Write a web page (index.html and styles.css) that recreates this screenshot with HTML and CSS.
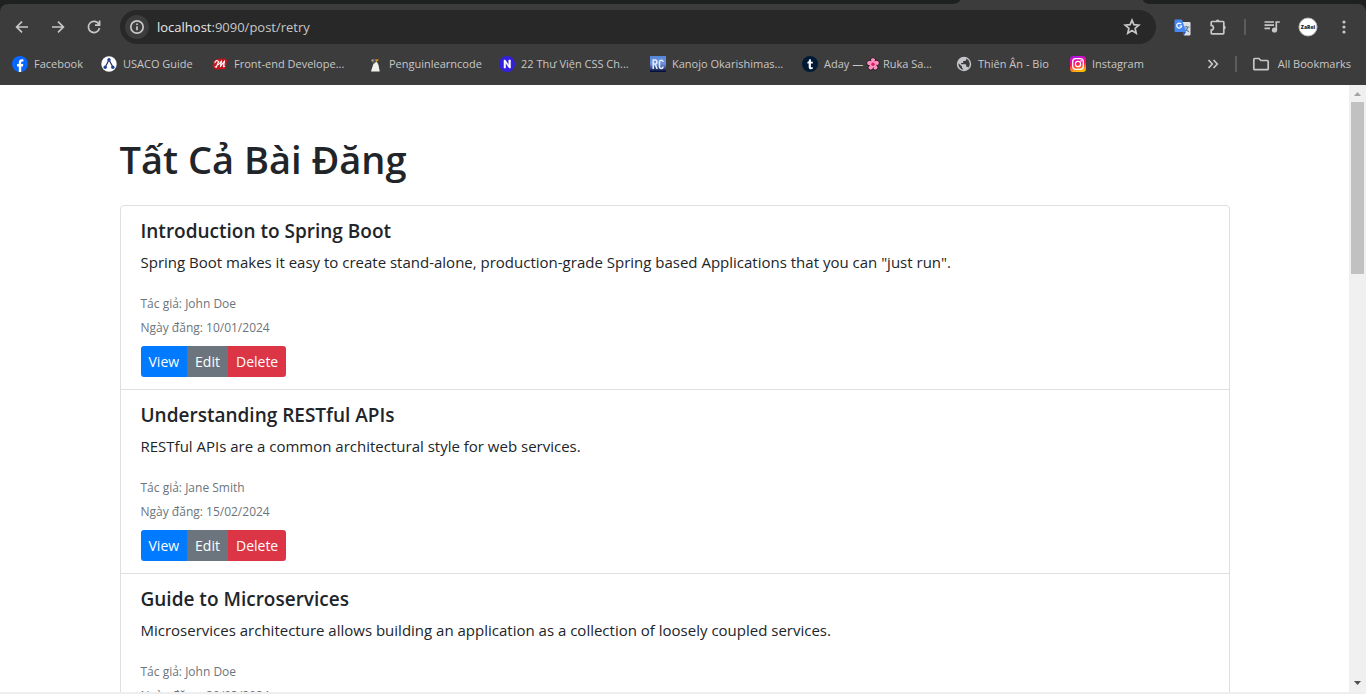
FILE: index.html
```html
<!DOCTYPE html>
<html lang="vi">
<head>
<meta charset="utf-8">
<title>Tất Cả Bài Đăng</title>
<link rel="stylesheet" href="styles.css">
</head>
<body>
<div class="browser">
  <header class="chrome">
    <div class="tabstrip"><span class="strip-left"></span><span class="strip-tab"></span><span class="strip-right"></span></div>
    <div class="frame">
    <div class="toolbar">
      <button class="tool" aria-label="Back"><svg width="16" height="16" viewBox="0 0 16 16" class="stroke"><path d="M14 8H3M8 2.6L2.6 8L8 13.4"/></svg></button>
      <button class="tool" aria-label="Forward"><svg width="16" height="16" viewBox="0 0 16 16" class="stroke"><path d="M2 8h11M8 2.6L13.4 8L8 13.4"/></svg></button>
      <button class="tool" aria-label="Reload"><svg width="16" height="16" viewBox="0 0 16 16" class="stroke"><path d="M12.9 5.2A5.6 5.6 0 1 0 13.5 9M13.6 1.6V6.2H9"/></svg></button>
      <div class="omnibox">
        <button class="site-info" aria-label="Site information"><svg width="16" height="16" viewBox="0 0 16 16" class="stroke"><circle cx="8" cy="8" r="6.2"/><path d="M8 7.2v4M8 4.4v1.5"/></svg></button>
        <div class="url"><span class="host">localhost</span>:9090/post/retry</div>
        <button class="tool" aria-label="Bookmark this page"><svg width="18" height="18" viewBox="0 0 18 18" class="stroke"><path d="M9 2.2l1.9 4.5 4.9.4-3.7 3.2 1.1 4.8L9 12.500l-4.200 2.600 1.100-4.800-3.700-3.200 4.900-.4z"/></svg></button>
      </div>
      <button class="tool" aria-label="Google Translate"><svg width="17" height="17" viewBox="0 0 17 17"><path d="M6 3h9.500a1 1 0 0 1 1 1v11.500a1 1 0 0 1-1 1H10z" fill="#dfe1e5"/><path d="M9.500 8h6M12.500 6.800V8M14 8c-.6 2.500-2 4-4 5M11.500 9.500c.8 1.500 2 2.600 3.500 3.300" stroke="#607d9b" stroke-width="1.100" fill="none"/><path d="M1.500.5H8l4 12.500H1.500a1 1 0 0 1-1-1V1.500a1 1 0 0 1 1-1z" fill="#4688f1"/><path d="M8.500 13H12l-2.200 3.400z" fill="#2757c4"/><path d="M7.300 5.200A2.500 2.500 0 1 0 7.700 7H5.400" stroke="#fff" stroke-width="1.200" fill="none"/></svg></button>
      <button class="tool" aria-label="Extensions"><svg width="18" height="18" viewBox="0 0 18 18" class="stroke"><path d="M3 3.500H14a.8.8 0 0 1 .8.8V15a.8.8 0 0 1-.8.8H3a.8.8 0 0 1-.8-.8V12.200C5.200 12 5.200 7.600 2.200 7.400V4.300A.8.8 0 0 1 3 3.500Z"/><path d="M6.800 3.500a1.900 1.900 0 0 1 3.800 0zM14.800 7.600a1.900 1.900 0 0 1 0 3.800z" fill="#c7c7c7" stroke="none"/></svg></button>
      <span class="divider"></span>
      <button class="tool" aria-label="Media controls"><svg width="18" height="16" viewBox="0 0 18 16"><path d="M1.500 3h9.500M1.500 6.200h9.500M1.500 9.400h5.500M13.300 11V3h3.500" class="stroke"/><circle cx="11.500" cy="11" r="2.600" fill="#c7c7c7"/></svg></button>
      <button class="tool" aria-label="Profile"><svg width="20" height="20" viewBox="0 0 20 20"><circle cx="10" cy="10" r="9" fill="#fff" stroke="#bcbcbc"/><text x="10" y="12" text-anchor="middle" class="avatar-text">ZaRei</text></svg></button>
      <button class="tool" aria-label="Menu"><svg width="6" height="16" viewBox="0 0 6 16" fill="#c7c7c7"><circle cx="3" cy="3" r="1.600"/><circle cx="3" cy="8" r="1.600"/><circle cx="3" cy="13" r="1.600"/></svg></button>
    </div>
    <nav class="bookmarks" aria-label="Bookmarks">
      <div class="marks">
      <a href="#"><svg width="16" height="16" viewBox="0 0 16 16"><circle cx="8" cy="8" r="8" fill="#0866ff"/><path d="M6.800 16V10.400H5V8h1.800V6.700C6.800 4.400 8 3.300 10 3.300c.6 0 1.100.1 1.400.2v2.100h-1c-1 0-1.200.5-1.200 1.300V8h2.100l-.4 2.400H9.200V16z" fill="#fff"/></svg>Facebook</a>
      <a href="#"><svg width="16" height="16" viewBox="0 0 16 16"><circle cx="8" cy="8" r="7.700" fill="#fff"/><path d="M8 3.800L4.200 11.300M8 3.800L12 11.300" stroke="#222c55" stroke-width="1.200"/><circle cx="8" cy="3.800" r="1.700" fill="#1c3f9b"/><circle cx="4.200" cy="11.300" r="1.700" fill="#1c3f9b"/><circle cx="11.800" cy="11.300" r="1.700" fill="#1c3f9b"/></svg>USACO Guide</a>
      <a href="#"><svg width="16" height="16" viewBox="0 0 16 16"><path d="M1.500 5L5 3l9-.5L15 5l-1.500 8-10.500.5-2.500-3z" fill="#c4161c"/><path d="M6 5C4 4 2.300 6.300 3.300 7M6.800 5L4.300 11.200 2.800 10.500M6.300 9L9.500 5 8.500 10.500 12.500 5 11.500 10.700 13 10" fill="none" stroke="#fff" stroke-width="1.200" stroke-linejoin="round"/></svg>Front-end Develope...</a>
      <a href="#"><svg width="16" height="16" viewBox="0 0 16 16"><path d="M7 6.500L10 6l1.500 3 1.200 6.500H4L6 9z" fill="#f1f1ec"/><path d="M4 3.500L7 2.500l2 1.500-.5 2L7 8 5 6.500z" fill="#55595b"/><path d="M8 3.500h4L9.500 6z" fill="#f4a21c"/><circle cx="5.500" cy="4.500" r="1" fill="#a9b0b3"/></svg>Penguinlearncode</a>
      <a href="#"><svg width="16" height="16" viewBox="0 0 16 16"><circle cx="8" cy="8" r="8" fill="#3420dc"/><path d="M5 12V4h1.200L9.800 9.200V4H11.500V12H10.200L6.600 6.800V12z" fill="#fff" stroke="#fff" stroke-width=".5"/></svg>22 Thư Viện CSS Ch...</a>
      <a href="#"><svg width="16" height="16" viewBox="0 0 16 16"><defs><linearGradient id="rc" x2="0" y2="1"><stop stop-color="#5686d8"/><stop offset=".5" stop-color="#6d93dc"/><stop offset="1" stop-color="#00072f"/></linearGradient></defs><rect width="16" height="16" fill="url(#rc)"/><path d="M3.200 13V4h2.300c1.800 0 1.800 4 0 4H3.500M5.200 8l2 5M13 6c0-2.500-3.500-2.500-3.500 0v4.500c0 2.500 3.500 2.500 3.500 0" fill="none" stroke="#e4edff" stroke-width="1.500"/></svg>Kanojo Okarishimas...</a>
      <a href="#"><svg width="16" height="16" viewBox="0 0 16 16"><circle cx="8" cy="8" r="8" fill="#001935"/><path d="M7.300 3.300h1.600v2.500h1.900v1.800H8.900v2.800c0 1.100.9 1.200 1.900.7v1.700c-2.300 1-4.100.2-4.100-1.900V7.600H5.400V6.100c1.200-.4 1.700-1.500 1.900-2.800z" fill="#fff"/></svg><span>Aday — <svg class="flower" width="14" height="14" viewBox="0 0 14 14"><g fill="#ff8fc0" stroke="#241a20"><circle cx="7" cy="3.300" r="2.700"/><circle cx="10.700" cy="6" r="2.700"/><circle cx="9.300" cy="10.400" r="2.700"/><circle cx="4.700" cy="10.400" r="2.700"/><circle cx="3.300" cy="6" r="2.700"/></g><circle cx="7" cy="7.200" r="3.400" fill="#ff8fc0"/><circle cx="7" cy="7.200" r="1.700" fill="#d81b60"/></svg> Ruka Sa...</span></a>
      <a href="#"><svg width="16" height="16" viewBox="0 0 16 16"><circle cx="8" cy="8" r="7.200" fill="#c4c6c9"/><path d="M10.300 2.600V3.300c0 1-.7 1.600-1.600 1.600H7.200v1.300c0 .5-.4.8-.9.8H5v1.200h4.300c.5 0 .9.400.9.900v1.700h.8c.6 0 1.100.4 1.300.9A5.800 5.800 0 0 0 10.300 2.600zM2.500 7.200L6 10.500v.8c0 .8.500 1.400 1.200 1.500v1A5.900 5.900 0 0 1 2.500 7.200z" fill="#3c3c3c"/></svg>Thiên Ân - Bio</a>
      <a href="#"><svg width="16" height="16" viewBox="0 0 16 16"><defs><linearGradient id="ig" x1="0.300" y1="0" x2="0.500" y2="1"><stop stop-color="#b312f0"/><stop offset=".5" stop-color="#ff0f62"/><stop offset="1" stop-color="#ffc400"/></linearGradient></defs><rect width="16" height="16" rx="3.500" fill="url(#ig)"/><g fill="none" stroke="#fff" stroke-width="1.300"><rect x="2.700" y="2.700" width="10.600" height="10.600" rx="3"/><circle cx="8" cy="8" r="2.600"/></g><circle cx="11.100" cy="4.900" r=".8" fill="#fff"/></svg>Instagram</a>
      </div>
      <button class="more" aria-label="More bookmarks"><svg width="12" height="12" viewBox="0 0 12 12" class="stroke"><path d="M1.500 2L5.300 6L1.500 10M6.500 2L10.300 6L6.500 10"/></svg></button>
      <span class="divider"></span>
      <a href="#" class="all"><svg width="18" height="16" viewBox="0 0 18 16" class="stroke"><path d="M2.800 2.500H7l1.800 2h6.400a1 1 0 0 1 1 1v7.200a1 1 0 0 1-1 1H2.800a1 1 0 0 1-1-1V3.500a1 1 0 0 1 1-1z"/></svg>All Bookmarks</a>
    </nav>
    </div>
  </header>
  <div class="viewport">
    <main class="page">
      <div class="container">
        <h1>Tất Cả Bài Đăng</h1>
        <ul class="posts">
          <li class="post">
            <h5>Introduction to Spring Boot</h5>
            <p>Spring Boot makes it easy to create stand-alone, production-grade Spring based Applications that you can "just run".</p>
            <small>Tác giả: John Doe</small>
            <small>Ngày đăng: 10/01/2024</small>
            <div class="actions"><button class="btn view">View</button><button class="btn edit">Edit</button><button class="btn delete">Delete</button></div>
          </li>
          <li class="post">
            <h5>Understanding RESTful APIs</h5>
            <p>RESTful APIs are a common architectural style for web services.</p>
            <small>Tác giả: Jane Smith</small>
            <small>Ngày đăng: 15/02/2024</small>
            <div class="actions"><button class="btn view">View</button><button class="btn edit">Edit</button><button class="btn delete">Delete</button></div>
          </li>
          <li class="post">
            <h5>Guide to Microservices</h5>
            <p>Microservices architecture allows building an application as a collection of loosely coupled services.</p>
            <small>Tác giả: John Doe</small>
            <small>Ngày đăng: 20/03/2024</small>
            <div class="actions"><button class="btn view">View</button><button class="btn edit">Edit</button><button class="btn delete">Delete</button></div>
          </li>
        </ul>
      </div>
    </main>
    <div class="scrollbar" aria-hidden="true">
      <svg width="17" height="17" viewBox="0 0 17 17"><path d="M5 11h7L8.500 7z" fill="#a3a3a3"/></svg>
      <div class="track"><div class="thumb"></div></div>
      <svg width="17" height="17" viewBox="0 0 17 17"><path d="M5 6h7L8.500 10z" fill="#505050"/></svg>
    </div>
  </div>
  <div class="taskbar-edge"></div>
</div>
</body>
</html>
```
FILE: styles.css
```css
* { box-sizing: border-box; }
body {
  margin: 0;
  font-family: "Open Sans", "Noto Sans", sans-serif;
  font-size: 15px;
  line-height: 24px;
  color: #212529;
  background: #fff;
}
button { font: inherit; border: 0; padding: 0; background: none; }
svg { flex: none; }
.stroke { fill: none; stroke: #c7c7c7; stroke-width: 1.7; }

.browser { display: flex; flex-direction: column; height: 100vh; overflow: hidden; }

.chrome { flex: none; background: #1f2020; font-size: 11px; color: #c7c7c7; }
.tabstrip { display: flex; height: 4px; background: #3c3c3c; }
.strip-left { flex: 1; background: #1f2020; border-bottom-right-radius: 8px 4px; }
.strip-tab { width: 183px; }
.strip-right { width: 223px; background: #1f2020; border-bottom-left-radius: 8px 4px; }
.frame { background: #3c3c3c; border-radius: 8px 8px 0 0; }
.toolbar { display: flex; align-items: center; height: 46px; padding: 0 4px; }
.tool {
  display: flex;
  flex: none;
  align-items: center;
  justify-content: center;
  width: 36px;
  height: 34px;
}
.omnibox {
  display: flex;
  flex: 1;
  align-items: center;
  height: 34px;
  margin: 0 8px;
  padding: 0 6px 0 5px;
  border-radius: 17px;
  background: #282828;
}
.site-info {
  display: flex;
  align-items: center;
  justify-content: center;
  width: 24px;
  height: 24px;
  border-radius: 50%;
  background: #3c3c3c;
}
.url { flex: 1; margin-left: 8px; font-size: 13px; }
.host { color: #e9e9e9; }
.divider { flex: none; width: 2px; height: 16px; margin: 0 8px; background: #5c5c5c; }
.avatar-text { font-family: "Open Sans", sans-serif; font-size: 5px; font-weight: 800; fill: #222; }

.bookmarks { display: flex; align-items: center; height: 35px; padding: 0 15px 7px 12px; }
.bookmarks a {
  display: flex;
  align-items: center;
  gap: 6px;
  color: inherit;
  text-decoration: none;
  white-space: nowrap;
}
.marks {
  display: grid;
  flex: 1;
  grid-template-columns: 89px 111px 155px 132px 151px 152px 154px 114px auto;
}
.flower { vertical-align: -3px; }
.more { display: flex; margin-right: 8px; }
.bookmarks .divider { margin: 0 15px 0 8px; }
.bookmarks .all { gap: 8px; }

.viewport { display: flex; flex: 1; min-height: 0; }
.page { flex: 1; overflow: hidden; }
.container { max-width: 1110px; margin: 0 auto; padding-top: 50px; }
h1 { margin: 0 0 22px; font-size: 38px; font-weight: 600; line-height: 48px; }
.posts { margin: 0; padding: 0; list-style: none; border: 1px solid #dfdfdf; border-radius: 4px; }
.post { padding: 13px 20px 12px; }
.post + .post { border-top: 1px solid #dfdfdf; }
h5 { margin: 0 0 7px; font-size: 19px; font-weight: 600; line-height: 24px; }
p { margin: 0 0 18px; }
small { display: block; font-size: 12px; color: #6c757d; }
.actions { display: flex; margin-top: 6px; }
.btn { height: 31px; padding: 0 8px; font-size: 14px; color: #fff; }
.view { background: #007bff; border-radius: 3px 0 0 3px; }
.edit { background: #6c757d; }
.delete { background: #dc3545; border-radius: 0 3px 3px 0; }

.scrollbar { display: flex; flex-direction: column; width: 17px; background: #f0f0f0; }
.track { flex: 1; padding: 0 2px; }
.thumb { height: 30%; background: #c1c1c1; }
.taskbar-edge { flex: none; height: 2px; background: #eee; }
```
